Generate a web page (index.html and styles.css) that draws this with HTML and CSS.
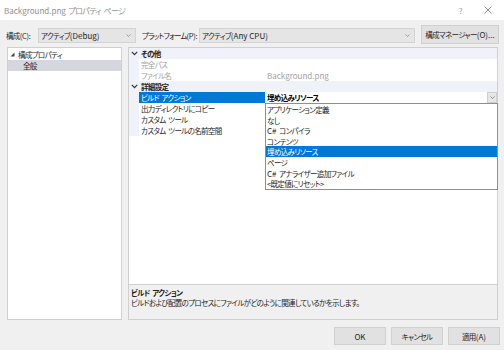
FILE: index.html
```html
<!DOCTYPE html>
<html lang="ja">
<head>
<meta charset="utf-8">
<link rel="stylesheet" href="styles.css">
</head>
<body>
<div class="window">
  <div class="titlebar">
    <span class="title"><span class="lat">Background.png</span> プロパティ ページ</span>
    <span class="help">?</span>
    <svg class="close" width="8" height="8" viewBox="0 0 8 8"><path d="M0.5 0.5L7.5 7.5M7.5 0.5L0.5 7.5" stroke="#8a8a8a" stroke-width="0.9" fill="none"/></svg>
  </div>
  <div class="toolbar">
    <span class="lbl lbl-config">構成<span class="lat">(C):</span></span>
    <div class="combo combo-config"><span class="combo-text">アクティブ<span class="lat">(Debug)</span></span><svg class="chev" width="5" height="3" viewBox="0 0 5 3"><path d="M0.5 0.5L2.5 2.5L4.5 0.5" stroke="#8c8c8c" stroke-width="0.8" fill="none"/></svg></div>
    <span class="lbl lbl-platform">プラットフォーム<span class="lat">(P):</span></span>
    <div class="combo combo-platform"><span class="combo-text">アクティブ<span class="lat">(Any CPU)</span></span><svg class="chev" width="5" height="3" viewBox="0 0 5 3"><path d="M0.5 0.5L2.5 2.5L4.5 0.5" stroke="#8c8c8c" stroke-width="0.8" fill="none"/></svg></div>
    <button class="btn btn-manager">構成マネージャー<span class="lat">(O)...</span></button>
  </div>
  <div class="main">
    <div class="tree">
      <div class="tree-row"><svg class="tri" width="5" height="5" viewBox="0 0 5 5"><polygon points="4.5,0.5 4.5,4.5 0.5,4.5" fill="#444"/></svg><span>構成プロパティ</span></div>
      <div class="tree-row tree-child selected"><span>全般</span></div>
    </div>
    <div class="right">
      <div class="grid">
        <div class="row cat"><span class="gutter"><svg width="7" height="5" viewBox="0 0 7 5"><path d="M0.8 0.8L3.5 3.6L6.2 0.8" stroke="#333" stroke-width="1.2" fill="none"/></svg></span><span class="cat-name">その他</span></div>
        <div class="row ro"><span class="gutter"></span><span class="name">完全パス</span><span class="value"></span></div>
        <div class="row ro"><span class="gutter"></span><span class="name">ファイル名</span><span class="value lat">Background.png</span></div>
        <div class="row cat"><span class="gutter"><svg width="7" height="5" viewBox="0 0 7 5"><path d="M0.8 0.8L3.5 3.6L6.2 0.8" stroke="#333" stroke-width="1.2" fill="none"/></svg></span><span class="cat-name">詳細設定</span></div>
        <div class="row sel"><span class="gutter"></span><span class="name">ビルド アクション</span><span class="value field"><span class="field-text">埋め込みリソース</span><span class="drop-btn"><svg width="5" height="3" viewBox="0 0 5 3"><path d="M0.5 0.5L2.5 2.5L4.5 0.5" stroke="#777" stroke-width="0.8" fill="none"/></svg></span></span></div>
        <div class="row"><span class="gutter"></span><span class="name">出力ディレクトリにコピー</span><span class="value"></span></div>
        <div class="row"><span class="gutter"></span><span class="name">カスタム ツール</span><span class="value"></span></div>
        <div class="row"><span class="gutter"></span><span class="name">カスタム ツールの名前空間</span><span class="value"></span></div>
        <ul class="dropdown">
          <li>アプリケーション定義</li>
          <li>なし</li>
          <li><span class="lat">C#</span> コンパイラ</li>
          <li>コンテンツ</li>
          <li class="active">埋め込みリソース</li>
          <li>ページ</li>
          <li><span class="lat">C#</span> アナライザー追加ファイル</li>
          <li>&lt;既定値にリセット&gt;</li>
        </ul>
      </div>
      <div class="desc">
        <div class="desc-title">ビルド アクション</div>
        <div class="desc-text">ビルドおよび配置のプロセスにファイルがどのように関連しているかを示します。</div>
      </div>
    </div>
  </div>
  <div class="footer">
    <button class="btn btn-foot"><span class="lat">OK</span></button>
    <button class="btn btn-foot">キャンセル</button>
    <button class="btn btn-foot">適用<span class="lat">(A)</span></button>
  </div>
</div>
</body>
</html>
```

FILE: styles.css
```css
* { box-sizing: border-box; }
html, body { margin: 0; padding: 0; }
body {
  width: 504px;
  height: 350px;
  overflow: hidden;
  background: #f0f0f0;
  font-family: "Noto Sans CJK JP", "Noto Sans", sans-serif;
  font-feature-settings: "palt";
  font-size: 7.5px;
  letter-spacing: -0.65px;
  word-spacing: 1.5px;
  color: #1e1e1e;
}
.lat { letter-spacing: 0; word-spacing: 0; font-size: 8px; }
.window { width: 504px; height: 350px; display: flex; flex-direction: column; }

.titlebar {
  height: 20px;
  background: #ffffff;
  display: flex;
  align-items: center;
  padding-left: 4px;
  flex: none;
}
.title { color: #8f8f8f; font-size: 8px; flex: 1; }
.help { color: #9a9a9a; font-size: 8px; margin-right: 22px; }
.close { margin-right: 12px; }

.toolbar {
  height: 27px;
  flex: none;
  display: flex;
  align-items: flex-start;
  padding-top: 8px;
  padding-left: 6px;
}
.lbl { height: 15px; line-height: 15px; color: #1e1e1e; white-space: nowrap; flex: none; }
.lbl .lat { font-size: 7.5px; letter-spacing: -0.3px; }
.lbl-config { width: 32px; }
.lbl-platform { width: 57px; margin-left: 6px; letter-spacing: -0.85px; }
.combo {
  height: 15px;
  flex: none;
  background: #e5e5e5;
  border: 1px solid #d4d4d4;
  display: flex;
  align-items: center;
  padding: 0 4px 0 2px;
}
.combo-text { flex: 1; line-height: 13px; white-space: nowrap; }
.combo-config { width: 98px; }
.combo-platform { width: 216px; }
.btn {
  font-family: inherit;
  font-feature-settings: "palt";
  font-size: 7.5px;
  letter-spacing: -0.65px;
  color: #1e1e1e;
  background: #e1e1e1;
  border: 1px solid #d0d0d0;
  padding: 0;
  margin: 0;
  white-space: nowrap;
}
.btn-manager { width: 78px; height: 19px; margin-left: 6px; margin-top: -3px; flex: none; }

.main {
  height: 273px;
  flex: none;
  display: flex;
  gap: 6px;
  padding: 0 6px 0 7px;
}
.tree {
  width: 115px;
  background: #ffffff;
  border: 1px solid #cfcfcf;
  padding-top: 1px;
}
.tree-row { height: 11px; line-height: 12px; display: flex; align-items: center; padding-left: 2px; overflow: hidden; }
.tri { margin-right: 3px; }
.tree-child { padding-left: 15px; }
.selected { background: #d6d6de; }

.right { flex: 1; display: flex; flex-direction: column; }
.grid {
  flex: 1;
  position: relative;
  background: #ffffff;
  border: 1px solid #cfcfcf;
  border-bottom: none;
}
.row { height: 11px; display: flex; line-height: 12px; overflow: hidden; }
.gutter {
  width: 10px;
  flex: none;
  background: #eff2f9;
  display: flex;
  align-items: center;
  justify-content: center;
}
.cat { background: #eff2f9; }
.cat-name { font-weight: bold; padding-left: 2px; color: #1e1e1e; }
.name { width: 126px; flex: none; padding-left: 2px; white-space: nowrap; overflow: hidden; }
.value { flex: 1; padding-left: 2px; white-space: nowrap; }
.ro .name, .ro .value { color: #a2a2a2; }
.sel .name { background: #0078d7; color: #ffffff; }
.field { display: flex; padding-right: 0; }
.field-text { flex: 1; font-weight: bold; color: #000; }
.drop-btn {
  width: 10px;
  height: 11px;
  background: #e6e6e6;
  border: 1px solid #cfcfcf;
  display: flex;
  align-items: center;
  justify-content: center;
}

.dropdown {
  position: absolute;
  left: 136px;
  top: 55px;
  width: 233px;
  margin: 0;
  padding: 0;
  list-style: none;
  background: #ffffff;
  border: 1px solid #8f8f8f;
}
.dropdown li { height: 10.6px; line-height: 11.5px; padding-left: 1px; white-space: nowrap; overflow: hidden; }
.dropdown li.active { background: #0078d7; color: #ffffff; }

.desc {
  height: 36px;
  flex: none;
  background: #f0f0f0;
  border: 1px solid #cfcfcf;
  padding: 3px 2px 0 2px;
}
.desc-title { font-weight: bold; line-height: 10px; }
.desc-text { line-height: 10px; }

.footer {
  flex: 1;
  display: flex;
  justify-content: flex-end;
  align-items: flex-start;
  gap: 5px;
  padding-top: 7px;
  padding-right: 4px;
}
.btn-foot { width: 52px; height: 18px; }
```
